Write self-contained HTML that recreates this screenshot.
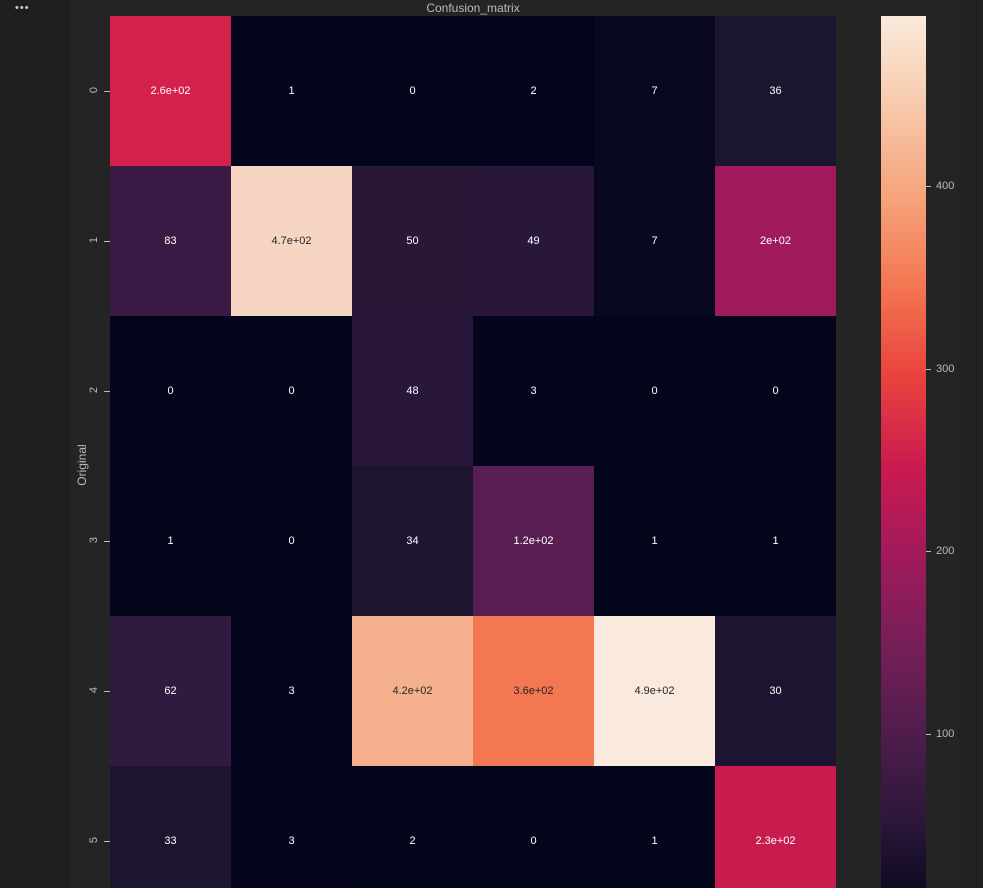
<!DOCTYPE html>
<html style="width:983px;height:888px;overflow:hidden"><head><style>
body{margin:0;width:983px;height:888px;overflow:hidden;background:#1f1f1f;font-family:"Liberation Sans",sans-serif;position:relative}
.plot{position:absolute;left:70px;top:0;width:889px;height:888px;background:#242424}
.rs{position:absolute;left:959px;top:0;width:24px;height:888px;background:#212121}
.c{position:absolute;width:121px;height:150px;display:flex;align-items:center;justify-content:center;font-size:11px;color:#fff}
.d{color:#262626}
.yt{position:absolute;left:86px;font-size:11px;color:#bbb;transform:rotate(-90deg);width:16px;text-align:center}
.tk{position:absolute;left:104px;width:6px;height:1px;background:#bbb}
.cb{position:absolute;left:881px;top:16px;width:45px;height:872px;background:linear-gradient(to bottom,#faebdd 0%,#f7c9ab 10.3%,#f6a47c 20.6%,#f37651 31%,#e9433e 41.3%,#cb1b4f 51.6%,#a11a5b 61.9%,#761f58 72.2%,#4e1d4c 82.6%,#2a1639 92.9%,#0f0b22 100%)}
.ct{position:absolute;left:926px;font-size:11px;color:#bbb}
.ct span{display:inline-block;width:5px;height:1px;background:#bbb;vertical-align:middle;margin-right:5px}
</style></head><body>
<div style="position:absolute;left:15px;top:2px;color:#ccc;font-size:11px;letter-spacing:1px">•••</div>
<div class="plot"></div><div class="rs"></div>
<div style="position:absolute;left:110px;width:726px;top:1px;text-align:center;font-size:12px;color:#bbb">Confusion_matrix</div>
<div style="position:absolute;left:52px;top:458px;width:60px;font-size:12px;color:#bbb;transform:rotate(-90deg);text-align:center">Original</div>
<div id="g"></div>
<div class="cb"></div>
<div class="ct" style="top:180px"><span></span>400</div>
<div class="ct" style="top:363px"><span></span>300</div>
<div class="ct" style="top:545px"><span></span>200</div>
<div class="ct" style="top:728px"><span></span>100</div>
<script>
var v=[["2.6e+02","1","0","2","7","36"],["83","4.7e+02","50","49","7","2e+02"],["0","0","48","3","0","0"],["1","0","34","1.2e+02","1","1"],["62","3","4.2e+02","3.6e+02","4.9e+02","30"],["33","3","2","0","1","2.3e+02"]];
var c=[["#d3214b","#04051c","#03051a","#04051c","#080920","#1b1530"],["#3a1a45","#f6d6c2","#2a1738","#29173a","#080920","#a11a5b"],["#03051a","#03051a","#28173a","#04051c","#03051a","#03051a"],["#03051a","#03051a","#1e1430","#5a1f52","#03051a","#03051a"],["#301a40","#04051c","#f5b08d","#f37751","#faeade","#1c1430"],["#1d1430","#04051c","#03051a","#03051a","#03051a","#c81c4f"]];
var dk=["4.7e+02","4.2e+02","3.6e+02","4.9e+02"];var h="";
for(var r=0;r<6;r++){var y=16+r*150;var hh=Math.min(150,888-y);h+='<div class="yt" style="top:'+(y+68)+'px">'+r+'</div><div class="tk" style="top:'+(y+75)+'px"></div>';
for(var k=0;k<6;k++){h+='<div class="c'+(dk.indexOf(v[r][k])>=0?' d':'')+'" style="left:'+(110+k*121)+'px;top:'+y+'px;height:'+hh+'px;background:'+c[r][k]+'"><span style="position:relative;top:'+(75-hh/2)+'px">'+v[r][k]+'</span></div>';}}
document.getElementById("g").innerHTML=h;
</script>
</body></html>
